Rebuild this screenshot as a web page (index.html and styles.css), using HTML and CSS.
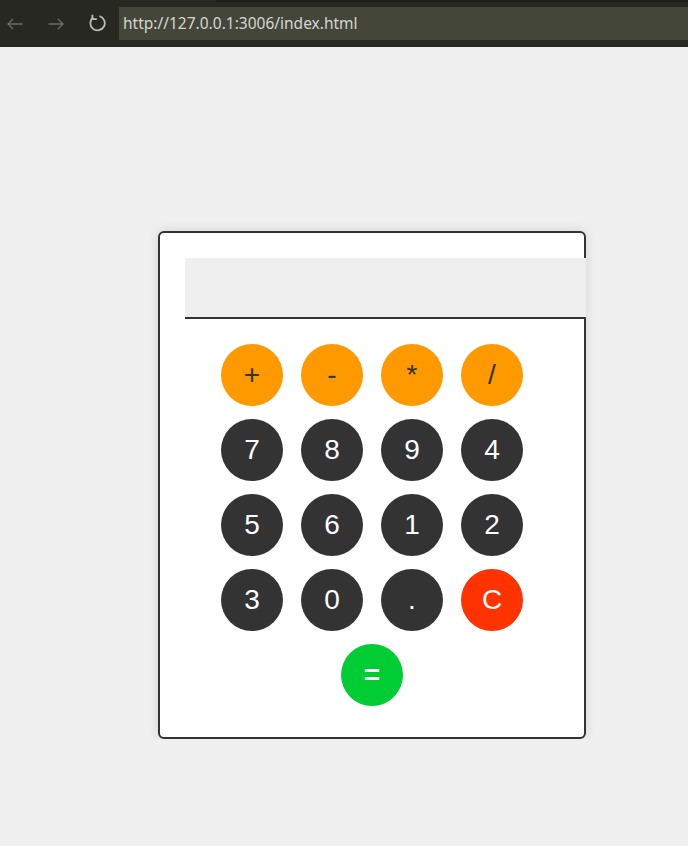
FILE: index.html
```html
<!DOCTYPE html>
<html lang="en">
<head>
<meta charset="utf-8">
<title>Calculator</title>
<link rel="stylesheet" href="styles.css">
</head>
<body>
<div class="chrome">
  <div class="topstrip"></div>
  <div class="navrow">
    <svg class="nav back" width="16" height="12" viewBox="0 0 16 12"><path d="M15.5 6H1M6 1L1 6l5 5" fill="none" stroke="currentColor" stroke-width="1.3"/></svg>
    <svg class="nav fwd" width="16" height="12" viewBox="0 0 16 12"><path d="M0.5 6H15M10 1l5 5-5 5" fill="none" stroke="currentColor" stroke-width="1.3"/></svg>
    <svg class="nav reload" width="18" height="18" viewBox="0 0 18 18"><path d="M5.2 3.4A7.2 7.2 0 1 0 11.5 2.2" fill="none" stroke="currentColor" stroke-width="1.8"/><path d="M4.4 0.8v4.4h4.4" fill="none" stroke="currentColor" stroke-width="1.8"/></svg>
    <div class="address">http://127.0.0.1:3006/index.html</div>
  </div>
</div>
<main class="page">
  <div class="calc">
    <div class="display"></div>
    <div class="keys">
      <button class="key op">+</button>
      <button class="key op">-</button>
      <button class="key op">*</button>
      <button class="key op">/</button>
      <button class="key num">7</button>
      <button class="key num">8</button>
      <button class="key num">9</button>
      <button class="key num">4</button>
      <button class="key num">5</button>
      <button class="key num">6</button>
      <button class="key num">1</button>
      <button class="key num">2</button>
      <button class="key num">3</button>
      <button class="key num">0</button>
      <button class="key num">.</button>
      <button class="key clear">C</button>
      <button class="key eq">=</button>
    </div>
  </div>
</main>
</body>
</html>
```
FILE: styles.css
```css
html, body {
  margin: 0;
  padding: 0;
  background: #f0f0f0;
  font-family: "Liberation Sans", Arial, sans-serif;
}

.chrome {
  height: 47px;
  background: #272822;
  position: relative;
}

.topstrip {
  position: absolute;
  left: 216px;
  right: 0;
  top: 0;
  height: 2px;
  background: #1d1e1a;
}

.navrow {
  display: flex;
  align-items: center;
  height: 47px;
}

.nav {
  flex: none;
  color: #6b6c66;
}

.back {
  margin-left: 7px;
}

.fwd {
  margin-left: 25px;
}

.reload {
  margin-left: 24px;
  margin-top: -1px;
  color: #bdbdb7;
}

.address {
  margin-left: 13px;
  flex: 1;
  height: 33px;
  background: #44463a;
  color: #d6d6d0;
  font-family: "Noto Sans", "Open Sans", sans-serif;
  font-size: 15.5px;
  line-height: 33px;
  padding-left: 4px;
  box-sizing: border-box;
}

.page {
  padding: 184px 0 0 158px;
}

.calc {
  width: 374px;
  padding: 25px 25px 31px;
  background: #fff;
  border: 2px solid #333;
  border-radius: 6px;
  box-shadow: 0 0 12px rgba(0, 0, 0, 0.12);
}

.display {
  width: 100%;
  height: 59px;
  padding: 0 13.5px;
  background: #efefef;
  border-bottom: 2px solid #333;
  position: relative;
}

.keys {
  margin-top: 25px;
  display: flex;
  flex-wrap: wrap;
  justify-content: center;
  gap: 13px 18px;
}

.key {
  width: 62px;
  height: 62px;
  border: none;
  border-radius: 50%;
  padding: 0;
  font-family: "Liberation Sans", Arial, sans-serif;
  font-size: 28px;
  line-height: 62px;
  color: #fff;
  cursor: pointer;
}

.op {
  background: #ff9900;
  color: #333;
}

.num {
  background: #333;
}

.clear {
  background: #ff3300;
}

.eq {
  background: #00cc33;
  font-weight: bold;
}
```
